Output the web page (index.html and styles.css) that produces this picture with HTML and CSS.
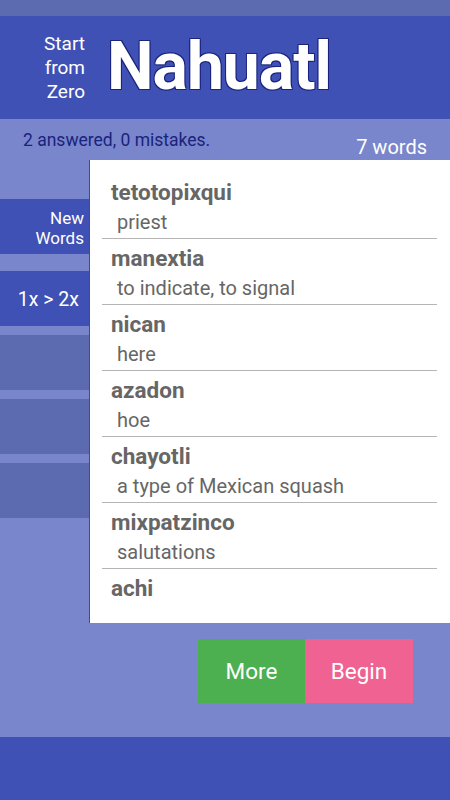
FILE: index.html
```html
<!DOCTYPE html>
<html lang="en">
<head>
  <meta charset="UTF-8">
  <meta name="viewport" content="width=device-width, initial-scale=1.0">
  <title>Start from Zero Nahuatl</title>
  <link rel="stylesheet" href="styles.css">
</head>
<body>
  <div class="status-bar"></div>
  <header class="app-header">
    <div class="tagline">Start<br>from<br>Zero</div>
    <h1 class="title">Nahuatl</h1>
  </header>

  <main class="main">
    <div class="info-row">
      <span class="progress">2 answered, 0 mistakes.</span>
      <span class="count">7 words</span>
    </div>

    <div class="content">
      <nav class="sidebar">
        <div class="side-btn active">New<br>Words</div>
        <div class="side-btn active single">1x &gt; 2x</div>
        <div class="side-btn"></div>
        <div class="side-btn"></div>
        <div class="side-btn"></div>
      </nav>

      <ul class="word-list">
        <li class="word-item">
          <div class="word">tetotopixqui</div>
          <div class="meaning">priest</div>
        </li>
        <li class="word-item">
          <div class="word">manextia</div>
          <div class="meaning">to indicate, to signal</div>
        </li>
        <li class="word-item">
          <div class="word">nican</div>
          <div class="meaning">here</div>
        </li>
        <li class="word-item">
          <div class="word">azadon</div>
          <div class="meaning">hoe</div>
        </li>
        <li class="word-item">
          <div class="word">chayotli</div>
          <div class="meaning">a type of Mexican squash</div>
        </li>
        <li class="word-item">
          <div class="word">mixpatzinco</div>
          <div class="meaning">salutations</div>
        </li>
        <li class="word-item">
          <div class="word">achi</div>
        </li>
      </ul>
    </div>

    <div class="actions">
      <button class="btn btn-more">More</button>
      <button class="btn btn-begin">Begin</button>
    </div>
  </main>

  <footer class="app-footer"></footer>
</body>
</html>
```

FILE: styles.css
```css
/* Basic styling */
body {
  font-family: Roboto, "Noto Sans", sans-serif;
  margin: 0;
  padding: 0;
  width: 450px;
  height: 800px;
  overflow: hidden;
  background-color: #7986cb;
}
.status-bar {
  height: 16px;
  background-color: #5c6bb0;
}
.app-header {
  height: 103px;
  background-color: #3f51b5;
  display: flex;
  align-items: center;
  color: #fff;
}
.tagline {
  width: 85px;
  text-align: right;
  font-size: 19px;
  line-height: 24px;
  margin-top: 1px;
}
.title {
  margin: -2px 0 0 22px;
  font-size: 66px;
  font-weight: 700;
  letter-spacing: -1px;
  line-height: 1;
  text-shadow: 1px 1px 0 #1a237e, -1px 1px 0 #1a237e, 1px -1px 0 #1a237e, -1px -1px 0 #1a237e;
}

/* Main area */
.main {
  height: 618px;
  display: flex;
  flex-direction: column;
}
.info-row {
  height: 41px;
  display: flex;
  justify-content: space-between;
}
.progress {
  padding: 11px 0 0 23px;
  font-size: 17.5px;
  color: #1a237e;
}
.count {
  align-self: flex-end;
  padding-right: 23px;
  margin-bottom: 1px;
  font-size: 20px;
  color: #fff;
}
.content {
  display: flex;
}
.sidebar {
  width: 89px;
  padding-top: 39px;
  display: flex;
  flex-direction: column;
  gap: 8px;
}
.side-btn {
  height: 55px;
  background-color: #5c6bb0;
}
.side-btn:nth-child(n+3) {
  margin-top: 1px;
}
.side-btn.active {
  background-color: #3f51b5;
  color: #fff;
  display: flex;
  flex-direction: column;
  justify-content: center;
  align-items: flex-end;
  text-align: right;
  padding: 2px 5px 0 0;
  box-sizing: border-box;
  font-size: 17px;
  line-height: 20px;
}
.side-btn.single {
  margin-top: 9px;
  padding-right: 10px;
  font-size: 19.5px;
}
.word-list {
  list-style: none;
  margin: 0;
  padding: 13px 13px 0 12px;
  flex: 1;
  height: 450px;
  background-color: #fff;
  border-left: 1px solid #3949ab;
  color: #666;
}
.word-item {
  height: 65px;
  border-bottom: 1px solid #b5b5b5;
}
.word-item:last-child {
  border-bottom: none;
}
.word {
  padding: 5px 0 0 9px;
  font-size: 22.5px;
  font-weight: 700;
  line-height: 28px;
}
.meaning {
  padding: 1px 0 0 15px;
  font-size: 20px;
  line-height: 31px;
}

/* Buttons */
.actions {
  display: flex;
  padding: 16px 0 0 198px;
}
.btn {
  height: 64px;
  border: none;
  color: #fff;
  font-family: Roboto, sans-serif;
  font-size: 22.5px;
  cursor: pointer;
}
.btn-more {
  width: 107px;
  background-color: #4caf50;
}
.btn-begin {
  width: 108px;
  background-color: #f06292;
}
.app-footer {
  height: 63px;
  background-color: #3f51b5;
}
```
